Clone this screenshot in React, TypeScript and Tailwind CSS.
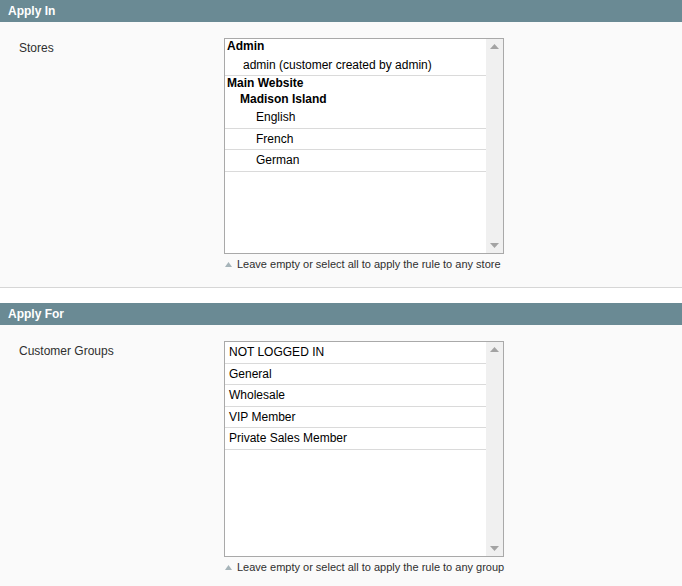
import React from "react";

type Row = { text: string; kind: "group" | "option"; indent: number };

const storeRows: Row[] = [
  { text: "Admin", kind: "group", indent: 2 },
  { text: "admin (customer created by admin)", kind: "option", indent: 18 },
  { text: "Main Website", kind: "group", indent: 2 },
  { text: "Madison Island", kind: "group", indent: 15 },
  { text: "English", kind: "option", indent: 31 },
  { text: "French", kind: "option", indent: 31 },
  { text: "German", kind: "option", indent: 31 },
];

const groupRows: Row[] = [
  { text: "NOT LOGGED IN", kind: "option", indent: 4 },
  { text: "General", kind: "option", indent: 4 },
  { text: "Wholesale", kind: "option", indent: 4 },
  { text: "VIP Member", kind: "option", indent: 4 },
  { text: "Private Sales Member", kind: "option", indent: 4 },
];

const MultiSelect = ({ rows }: { rows: Row[] }) => {
  return (
    <div className="flex h-[216px] w-[280px] border border-[#a9a9a9] bg-white">
      <div className="flex-1 overflow-hidden">
        {rows.map((r, i) =>
          r.kind === "group" ? (
            <div
              key={i}
              className="h-[15.5px] text-[12px] font-bold leading-[15px] text-black"
              style={{ paddingLeft: r.indent }}
            >
              {r.text}
            </div>
          ) : (
            <div
              key={i}
              className="h-[21.5px] border-b border-[#dadada] text-[12px] leading-[20px] text-black"
              style={{ paddingLeft: r.indent }}
            >
              {r.text}
            </div>
          )
        )}
      </div>
      <div className="flex w-[17px] flex-col items-center justify-between bg-[#f0f0f0] py-[5px]">
        <svg width="9" height="5" viewBox="0 0 9 5">
          <path d="M0 5 L4.5 0 L9 5 Z" fill="#a3a3a3" />
        </svg>
        <svg width="9" height="5" viewBox="0 0 9 5">
          <path d="M0 0 L4.5 5 L9 0 Z" fill="#a3a3a3" />
        </svg>
      </div>
    </div>
  );
};

const Hint = ({ text }: { text: string }) => (
  <div className="mt-[3px] flex items-center gap-[5px] pl-[1px] text-[11px] leading-[14px] text-[#2f2f2f]">
    <svg width="7" height="5" viewBox="0 0 7 5">
      <path d="M0 5 L3.5 0 L7 5 Z" fill="#a6b4b9" />
    </svg>
    <span>{text}</span>
  </div>
);

const Section = ({
  title,
  label,
  rows,
  hint,
}: {
  title: string;
  label: string;
  rows: Row[];
  hint: string;
}) => (
  <div>
    <div className="h-[22px] bg-[#6a8a94] px-[8px] text-[12px] font-bold leading-[22px] text-white">
      {title}
    </div>
    <div className="border-b border-[#d6d6d6] bg-[#fafafa] pb-[16px] pt-[16px]">
      <div className="flex">
        <div className="w-[224px] pl-[19px] pt-[3px] text-[12px] leading-[15px] text-[#2f2f2f]">
          {label}
        </div>
        <div>
          <MultiSelect rows={rows} />
          <Hint text={hint} />
        </div>
      </div>
    </div>
  </div>
);

export default function App() {
  return (
    <div
      className="h-[586px] w-[682px] overflow-hidden bg-white"
      style={{ fontFamily: '"Liberation Sans", Arial, sans-serif' }}
    >
      <Section
        title="Apply In"
        label="Stores"
        rows={storeRows}
        hint="Leave empty or select all to apply the rule to any store"
      />
      <div className="h-[15px]" />
      <Section
        title="Apply For"
        label="Customer Groups"
        rows={groupRows}
        hint="Leave empty or select all to apply the rule to any group"
      />
    </div>
  );
}
